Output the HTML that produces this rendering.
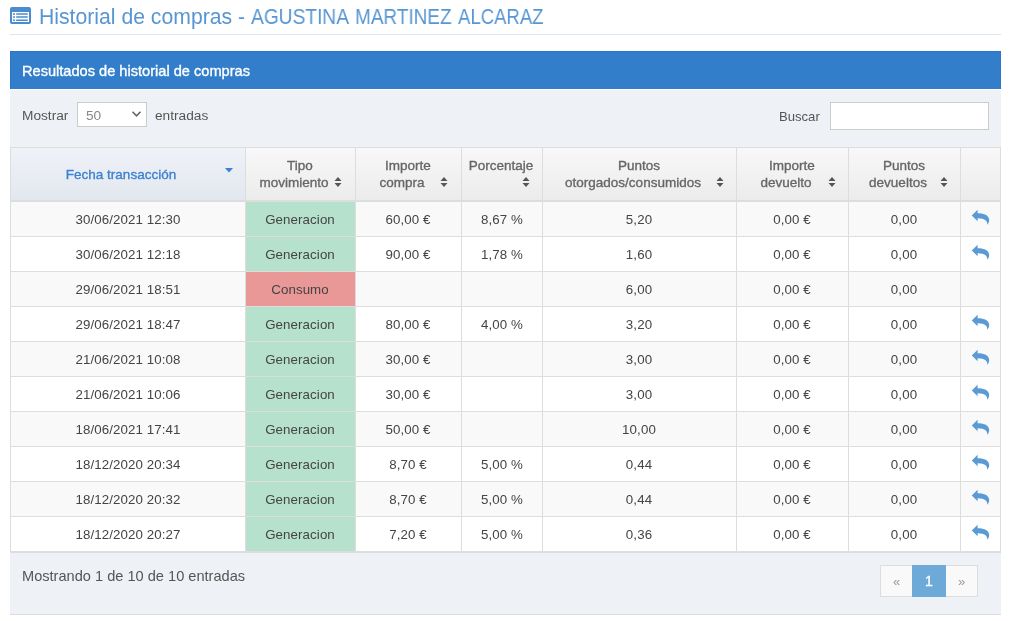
<!DOCTYPE html>
<html><head><meta charset="utf-8"><title>Historial de compras</title>
<style>
html,body{margin:0;padding:0;background:#fff;}
body{width:1011px;height:621px;position:relative;overflow:hidden;font-family:"Liberation Sans",sans-serif;color:#444444;}
.a{position:absolute;}
.t{position:absolute;white-space:nowrap;line-height:16px;height:16px;will-change:transform;}
.c{text-align:center;}
.hl{position:absolute;background:#dddddd;height:1px;}
.vl{position:absolute;background:#dddddd;width:1px;}
</style></head><body>

<svg class="a" style="left:10px;top:7px" width="21" height="17" viewBox="0 0 21 17">
<path fill="#4a8dce" d="M2,0H19A2,2 0 0 1 21,2V15A2,2 0 0 1 19,17H2A2,2 0 0 1 0,15V2A2,2 0 0 1 2,0ZM2,5V15H19V5Z"/>
<rect x="3" y="6.3" width="2" height="1.5" fill="#4a8dce"/><rect x="6" y="6.3" width="12" height="1.5" rx=".7" fill="#4a8dce"/>
<rect x="3" y="9.3" width="2" height="1.5" fill="#4a8dce"/><rect x="6" y="9.3" width="12" height="1.5" rx=".7" fill="#4a8dce"/>
<rect x="3" y="12.4" width="2" height="1.5" fill="#4a8dce"/><rect x="6" y="12.4" width="12" height="1.5" rx=".7" fill="#4a8dce"/>
</svg>
<div class="t" id="title1" style="left:39px;top:6px;font-size:21.2px;letter-spacing:0px;line-height:22px;height:22px;color:#5796d3">Historial de compras -</div>
<div class="t" style="left:251px;top:6px;font-size:21.2px;line-height:22px;height:22px;color:#5796d3;transform:scaleX(0.905);transform-origin:0 0">AGUSTINA</div>
<div class="t" style="left:354.5px;top:6px;font-size:21.2px;line-height:22px;height:22px;color:#5796d3;transform:scaleX(0.895);transform-origin:0 0">MARTINEZ</div>
<div class="t" style="left:457.5px;top:6px;font-size:21.2px;line-height:22px;height:22px;color:#5796d3;transform:scaleX(0.875);transform-origin:0 0">ALCARAZ</div>
<div class="a" style="left:10px;top:34px;width:991px;height:1px;background:#dce6f1"></div>
<div class="a" style="left:10px;top:51px;width:991px;height:38px;background:#327ecb;box-sizing:border-box;border:1px solid #2a77c9;border-bottom:0"></div>
<div class="t" id="ph" style="left:22px;top:63px;font-size:14.6px;-webkit-text-stroke:0.35px #fff;color:#fff">Resultados de historial de compras</div>
<div class="a" style="left:10px;top:90px;width:991px;height:524px;background:#eef1f6"></div>
<div class="a" style="left:10px;top:614px;width:991px;height:1px;background:#dddddd"></div>
<div class="t" id="mostrar" style="left:22px;top:108px;font-size:13.7px;color:#555555">Mostrar</div>
<div class="a" style="left:77px;top:102px;width:70px;height:25px;box-sizing:border-box;border:1px solid #cccccc;background:#fff"></div>
<div class="t" style="left:86px;top:108px;font-size:13.7px;color:#888">50</div>
<svg class="a" style="left:131px;top:110px" width="11" height="8" viewBox="0 0 11 8"><path d="M1.5,1.8L5.5,5.8L9.5,1.8" fill="none" stroke="#666" stroke-width="1.6"/></svg>
<div class="t" id="entradas" style="left:155px;top:108px;font-size:13.7px;color:#555555">entradas</div>
<div class="t" id="buscar" style="left:779px;top:109px;font-size:13.1px;color:#555555">Buscar</div>
<div class="a" style="left:830px;top:102px;width:159px;height:28px;box-sizing:border-box;border:1px solid #cccccc;background:#fff"></div>
<div class="a" style="left:10px;top:147px;width:991px;height:55px;background:linear-gradient(#f8f8f8,#ebebeb)"></div>
<div class="a" style="left:10px;top:147px;width:235px;height:55px;background:linear-gradient(#eff2f7,#e2e7ef)"></div>
<div class="hl" style="left:10px;top:147px;width:991px"></div>
<div class="hl" style="left:10px;top:200px;width:991px;height:2px"></div>
<div class="a" style="left:10px;top:202px;width:991px;height:34px;background:#f9f9f9"></div>
<div class="a" style="left:246px;top:202px;width:109px;height:34px;background:#b6e1cc"></div>
<div class="hl" style="left:10px;top:236px;width:991px;height:1px"></div>
<div class="a" style="left:10px;top:237px;width:991px;height:34px;background:#ffffff"></div>
<div class="a" style="left:246px;top:237px;width:109px;height:34px;background:#b6e1cc"></div>
<div class="hl" style="left:10px;top:271px;width:991px;height:1px"></div>
<div class="a" style="left:10px;top:272px;width:991px;height:34px;background:#f9f9f9"></div>
<div class="a" style="left:246px;top:272px;width:109px;height:34px;background:#e99797"></div>
<div class="hl" style="left:10px;top:306px;width:991px;height:1px"></div>
<div class="a" style="left:10px;top:307px;width:991px;height:34px;background:#ffffff"></div>
<div class="a" style="left:246px;top:307px;width:109px;height:34px;background:#b6e1cc"></div>
<div class="hl" style="left:10px;top:341px;width:991px;height:1px"></div>
<div class="a" style="left:10px;top:342px;width:991px;height:34px;background:#f9f9f9"></div>
<div class="a" style="left:246px;top:342px;width:109px;height:34px;background:#b6e1cc"></div>
<div class="hl" style="left:10px;top:376px;width:991px;height:1px"></div>
<div class="a" style="left:10px;top:377px;width:991px;height:34px;background:#ffffff"></div>
<div class="a" style="left:246px;top:377px;width:109px;height:34px;background:#b6e1cc"></div>
<div class="hl" style="left:10px;top:411px;width:991px;height:1px"></div>
<div class="a" style="left:10px;top:412px;width:991px;height:34px;background:#f9f9f9"></div>
<div class="a" style="left:246px;top:412px;width:109px;height:34px;background:#b6e1cc"></div>
<div class="hl" style="left:10px;top:446px;width:991px;height:1px"></div>
<div class="a" style="left:10px;top:447px;width:991px;height:34px;background:#ffffff"></div>
<div class="a" style="left:246px;top:447px;width:109px;height:34px;background:#b6e1cc"></div>
<div class="hl" style="left:10px;top:481px;width:991px;height:1px"></div>
<div class="a" style="left:10px;top:482px;width:991px;height:34px;background:#f9f9f9"></div>
<div class="a" style="left:246px;top:482px;width:109px;height:34px;background:#b6e1cc"></div>
<div class="hl" style="left:10px;top:516px;width:991px;height:1px"></div>
<div class="a" style="left:10px;top:517px;width:991px;height:34px;background:#ffffff"></div>
<div class="a" style="left:246px;top:517px;width:109px;height:34px;background:#b6e1cc"></div>
<div class="hl" style="left:10px;top:551px;width:991px;height:2px"></div>
<div class="vl" style="left:10px;top:147px;height:406px"></div>
<div class="vl" style="left:245px;top:147px;height:406px"></div>
<div class="vl" style="left:355px;top:147px;height:406px"></div>
<div class="vl" style="left:461px;top:147px;height:406px"></div>
<div class="vl" style="left:542px;top:147px;height:406px"></div>
<div class="vl" style="left:736px;top:147px;height:406px"></div>
<div class="vl" style="left:848px;top:147px;height:406px"></div>
<div class="vl" style="left:960px;top:147px;height:406px"></div>
<div class="vl" style="left:1000px;top:147px;height:406px"></div>
<div class="t c" style="left:21px;width:200px;top:167px;font-size:13.5px;-webkit-text-stroke:0.35px #3d82d0;color:#3d82d0">Fecha transacción</div>
<div class="t c" style="left:200px;width:200px;top:158px;font-size:13.5px;-webkit-text-stroke:0.35px #666666;color:#666666">Tipo</div>
<div class="t c" style="left:194px;width:200px;top:175px;font-size:13.5px;-webkit-text-stroke:0.35px #666666;color:#666666">movimiento</div>
<div class="t c" style="left:308px;width:200px;top:158px;font-size:13.5px;-webkit-text-stroke:0.35px #666666;color:#666666">Importe</div>
<div class="t c" style="left:302px;width:200px;top:175px;font-size:13.5px;-webkit-text-stroke:0.35px #666666;color:#666666">compra</div>
<div class="t c" style="left:401px;width:200px;top:158px;font-size:13.5px;-webkit-text-stroke:0.35px #666666;color:#666666">Porcentaje</div>
<div class="t c" style="left:539px;width:200px;top:158px;font-size:13.5px;-webkit-text-stroke:0.35px #666666;color:#666666">Puntos</div>
<div class="t c" style="left:533px;width:200px;top:175px;font-size:13.5px;-webkit-text-stroke:0.35px #666666;color:#666666">otorgados/consumidos</div>
<div class="t c" style="left:692px;width:200px;top:158px;font-size:13.5px;-webkit-text-stroke:0.35px #666666;color:#666666">Importe</div>
<div class="t c" style="left:686px;width:200px;top:175px;font-size:13.5px;-webkit-text-stroke:0.35px #666666;color:#666666">devuelto</div>
<div class="t c" style="left:804px;width:200px;top:158px;font-size:13.5px;-webkit-text-stroke:0.35px #666666;color:#666666">Puntos</div>
<div class="t c" style="left:798px;width:200px;top:175px;font-size:13.5px;-webkit-text-stroke:0.35px #666666;color:#666666">devueltos</div>
<svg class="a" style="left:334px;top:176px" width="8" height="12" viewBox="0 0 8 12"><path d="M0.5,5H7.5L4,1Z M0.5,7H7.5L4,11Z" fill="#555"/></svg>
<svg class="a" style="left:440px;top:176px" width="8" height="12" viewBox="0 0 8 12"><path d="M0.5,5H7.5L4,1Z M0.5,7H7.5L4,11Z" fill="#555"/></svg>
<svg class="a" style="left:522px;top:176px" width="8" height="12" viewBox="0 0 8 12"><path d="M0.5,5H7.5L4,1Z M0.5,7H7.5L4,11Z" fill="#555"/></svg>
<svg class="a" style="left:716px;top:176px" width="8" height="12" viewBox="0 0 8 12"><path d="M0.5,5H7.5L4,1Z M0.5,7H7.5L4,11Z" fill="#555"/></svg>
<svg class="a" style="left:828px;top:176px" width="8" height="12" viewBox="0 0 8 12"><path d="M0.5,5H7.5L4,1Z M0.5,7H7.5L4,11Z" fill="#555"/></svg>
<svg class="a" style="left:940px;top:176px" width="8" height="12" viewBox="0 0 8 12"><path d="M0.5,5H7.5L4,1Z M0.5,7H7.5L4,11Z" fill="#555"/></svg>
<svg class="a" style="left:225px;top:168px" width="8" height="5" viewBox="0 0 8 5"><path d="M0,0H8L4,4.5Z" fill="#3d82d0"/></svg>
<div class="t c" style="left:27.5px;width:200px;top:212px;font-size:13.3px;letter-spacing:0.1px">30/06/2021 12:30</div>
<div class="t c" style="left:200.0px;width:200px;top:212px;font-size:13.3px;letter-spacing:0.1px">Generacion</div>
<div class="t c" style="left:308.0px;width:200px;top:212px;font-size:13.3px;letter-spacing:0.1px">60,00 €</div>
<div class="t c" style="left:401.5px;width:200px;top:212px;font-size:13.3px;letter-spacing:0.1px">8,67 %</div>
<div class="t c" style="left:539.0px;width:200px;top:212px;font-size:13.3px;letter-spacing:0.1px">5,20</div>
<div class="t c" style="left:692.0px;width:200px;top:212px;font-size:13.3px;letter-spacing:0.1px">0,00 €</div>
<div class="t c" style="left:804.0px;width:200px;top:212px;font-size:13.3px;letter-spacing:0.1px">0,00</div>
<svg class="a" style="left:971px;top:209px" width="19" height="16" viewBox="0 0 19 16"><path fill="#5b9bd5" d="M0.8,6.4L6.6,0.8V4.2C11.5,4.2 18.2,5.5 18.2,11C18.2,13 17.2,14.8 16.3,15.8C16.6,12.5 14.5,9.3 6.6,9.3V12.2Z"/></svg>
<div class="t c" style="left:27.5px;width:200px;top:247px;font-size:13.3px;letter-spacing:0.1px">30/06/2021 12:18</div>
<div class="t c" style="left:200.0px;width:200px;top:247px;font-size:13.3px;letter-spacing:0.1px">Generacion</div>
<div class="t c" style="left:308.0px;width:200px;top:247px;font-size:13.3px;letter-spacing:0.1px">90,00 €</div>
<div class="t c" style="left:401.5px;width:200px;top:247px;font-size:13.3px;letter-spacing:0.1px">1,78 %</div>
<div class="t c" style="left:539.0px;width:200px;top:247px;font-size:13.3px;letter-spacing:0.1px">1,60</div>
<div class="t c" style="left:692.0px;width:200px;top:247px;font-size:13.3px;letter-spacing:0.1px">0,00 €</div>
<div class="t c" style="left:804.0px;width:200px;top:247px;font-size:13.3px;letter-spacing:0.1px">0,00</div>
<svg class="a" style="left:971px;top:244px" width="19" height="16" viewBox="0 0 19 16"><path fill="#5b9bd5" d="M0.8,6.4L6.6,0.8V4.2C11.5,4.2 18.2,5.5 18.2,11C18.2,13 17.2,14.8 16.3,15.8C16.6,12.5 14.5,9.3 6.6,9.3V12.2Z"/></svg>
<div class="t c" style="left:27.5px;width:200px;top:282px;font-size:13.3px;letter-spacing:0.1px">29/06/2021 18:51</div>
<div class="t c" style="left:200.0px;width:200px;top:282px;font-size:13.3px;letter-spacing:0.1px">Consumo</div>
<div class="t c" style="left:539.0px;width:200px;top:282px;font-size:13.3px;letter-spacing:0.1px">6,00</div>
<div class="t c" style="left:692.0px;width:200px;top:282px;font-size:13.3px;letter-spacing:0.1px">0,00 €</div>
<div class="t c" style="left:804.0px;width:200px;top:282px;font-size:13.3px;letter-spacing:0.1px">0,00</div>
<div class="t c" style="left:27.5px;width:200px;top:317px;font-size:13.3px;letter-spacing:0.1px">29/06/2021 18:47</div>
<div class="t c" style="left:200.0px;width:200px;top:317px;font-size:13.3px;letter-spacing:0.1px">Generacion</div>
<div class="t c" style="left:308.0px;width:200px;top:317px;font-size:13.3px;letter-spacing:0.1px">80,00 €</div>
<div class="t c" style="left:401.5px;width:200px;top:317px;font-size:13.3px;letter-spacing:0.1px">4,00 %</div>
<div class="t c" style="left:539.0px;width:200px;top:317px;font-size:13.3px;letter-spacing:0.1px">3,20</div>
<div class="t c" style="left:692.0px;width:200px;top:317px;font-size:13.3px;letter-spacing:0.1px">0,00 €</div>
<div class="t c" style="left:804.0px;width:200px;top:317px;font-size:13.3px;letter-spacing:0.1px">0,00</div>
<svg class="a" style="left:971px;top:314px" width="19" height="16" viewBox="0 0 19 16"><path fill="#5b9bd5" d="M0.8,6.4L6.6,0.8V4.2C11.5,4.2 18.2,5.5 18.2,11C18.2,13 17.2,14.8 16.3,15.8C16.6,12.5 14.5,9.3 6.6,9.3V12.2Z"/></svg>
<div class="t c" style="left:27.5px;width:200px;top:352px;font-size:13.3px;letter-spacing:0.1px">21/06/2021 10:08</div>
<div class="t c" style="left:200.0px;width:200px;top:352px;font-size:13.3px;letter-spacing:0.1px">Generacion</div>
<div class="t c" style="left:308.0px;width:200px;top:352px;font-size:13.3px;letter-spacing:0.1px">30,00 €</div>
<div class="t c" style="left:539.0px;width:200px;top:352px;font-size:13.3px;letter-spacing:0.1px">3,00</div>
<div class="t c" style="left:692.0px;width:200px;top:352px;font-size:13.3px;letter-spacing:0.1px">0,00 €</div>
<div class="t c" style="left:804.0px;width:200px;top:352px;font-size:13.3px;letter-spacing:0.1px">0,00</div>
<svg class="a" style="left:971px;top:349px" width="19" height="16" viewBox="0 0 19 16"><path fill="#5b9bd5" d="M0.8,6.4L6.6,0.8V4.2C11.5,4.2 18.2,5.5 18.2,11C18.2,13 17.2,14.8 16.3,15.8C16.6,12.5 14.5,9.3 6.6,9.3V12.2Z"/></svg>
<div class="t c" style="left:27.5px;width:200px;top:387px;font-size:13.3px;letter-spacing:0.1px">21/06/2021 10:06</div>
<div class="t c" style="left:200.0px;width:200px;top:387px;font-size:13.3px;letter-spacing:0.1px">Generacion</div>
<div class="t c" style="left:308.0px;width:200px;top:387px;font-size:13.3px;letter-spacing:0.1px">30,00 €</div>
<div class="t c" style="left:539.0px;width:200px;top:387px;font-size:13.3px;letter-spacing:0.1px">3,00</div>
<div class="t c" style="left:692.0px;width:200px;top:387px;font-size:13.3px;letter-spacing:0.1px">0,00 €</div>
<div class="t c" style="left:804.0px;width:200px;top:387px;font-size:13.3px;letter-spacing:0.1px">0,00</div>
<svg class="a" style="left:971px;top:384px" width="19" height="16" viewBox="0 0 19 16"><path fill="#5b9bd5" d="M0.8,6.4L6.6,0.8V4.2C11.5,4.2 18.2,5.5 18.2,11C18.2,13 17.2,14.8 16.3,15.8C16.6,12.5 14.5,9.3 6.6,9.3V12.2Z"/></svg>
<div class="t c" style="left:27.5px;width:200px;top:422px;font-size:13.3px;letter-spacing:0.1px">18/06/2021 17:41</div>
<div class="t c" style="left:200.0px;width:200px;top:422px;font-size:13.3px;letter-spacing:0.1px">Generacion</div>
<div class="t c" style="left:308.0px;width:200px;top:422px;font-size:13.3px;letter-spacing:0.1px">50,00 €</div>
<div class="t c" style="left:539.0px;width:200px;top:422px;font-size:13.3px;letter-spacing:0.1px">10,00</div>
<div class="t c" style="left:692.0px;width:200px;top:422px;font-size:13.3px;letter-spacing:0.1px">0,00 €</div>
<div class="t c" style="left:804.0px;width:200px;top:422px;font-size:13.3px;letter-spacing:0.1px">0,00</div>
<svg class="a" style="left:971px;top:419px" width="19" height="16" viewBox="0 0 19 16"><path fill="#5b9bd5" d="M0.8,6.4L6.6,0.8V4.2C11.5,4.2 18.2,5.5 18.2,11C18.2,13 17.2,14.8 16.3,15.8C16.6,12.5 14.5,9.3 6.6,9.3V12.2Z"/></svg>
<div class="t c" style="left:27.5px;width:200px;top:457px;font-size:13.3px;letter-spacing:0.1px">18/12/2020 20:34</div>
<div class="t c" style="left:200.0px;width:200px;top:457px;font-size:13.3px;letter-spacing:0.1px">Generacion</div>
<div class="t c" style="left:308.0px;width:200px;top:457px;font-size:13.3px;letter-spacing:0.1px">8,70 €</div>
<div class="t c" style="left:401.5px;width:200px;top:457px;font-size:13.3px;letter-spacing:0.1px">5,00 %</div>
<div class="t c" style="left:539.0px;width:200px;top:457px;font-size:13.3px;letter-spacing:0.1px">0,44</div>
<div class="t c" style="left:692.0px;width:200px;top:457px;font-size:13.3px;letter-spacing:0.1px">0,00 €</div>
<div class="t c" style="left:804.0px;width:200px;top:457px;font-size:13.3px;letter-spacing:0.1px">0,00</div>
<svg class="a" style="left:971px;top:454px" width="19" height="16" viewBox="0 0 19 16"><path fill="#5b9bd5" d="M0.8,6.4L6.6,0.8V4.2C11.5,4.2 18.2,5.5 18.2,11C18.2,13 17.2,14.8 16.3,15.8C16.6,12.5 14.5,9.3 6.6,9.3V12.2Z"/></svg>
<div class="t c" style="left:27.5px;width:200px;top:492px;font-size:13.3px;letter-spacing:0.1px">18/12/2020 20:32</div>
<div class="t c" style="left:200.0px;width:200px;top:492px;font-size:13.3px;letter-spacing:0.1px">Generacion</div>
<div class="t c" style="left:308.0px;width:200px;top:492px;font-size:13.3px;letter-spacing:0.1px">8,70 €</div>
<div class="t c" style="left:401.5px;width:200px;top:492px;font-size:13.3px;letter-spacing:0.1px">5,00 %</div>
<div class="t c" style="left:539.0px;width:200px;top:492px;font-size:13.3px;letter-spacing:0.1px">0,44</div>
<div class="t c" style="left:692.0px;width:200px;top:492px;font-size:13.3px;letter-spacing:0.1px">0,00 €</div>
<div class="t c" style="left:804.0px;width:200px;top:492px;font-size:13.3px;letter-spacing:0.1px">0,00</div>
<svg class="a" style="left:971px;top:489px" width="19" height="16" viewBox="0 0 19 16"><path fill="#5b9bd5" d="M0.8,6.4L6.6,0.8V4.2C11.5,4.2 18.2,5.5 18.2,11C18.2,13 17.2,14.8 16.3,15.8C16.6,12.5 14.5,9.3 6.6,9.3V12.2Z"/></svg>
<div class="t c" style="left:27.5px;width:200px;top:527px;font-size:13.3px;letter-spacing:0.1px">18/12/2020 20:27</div>
<div class="t c" style="left:200.0px;width:200px;top:527px;font-size:13.3px;letter-spacing:0.1px">Generacion</div>
<div class="t c" style="left:308.0px;width:200px;top:527px;font-size:13.3px;letter-spacing:0.1px">7,20 €</div>
<div class="t c" style="left:401.5px;width:200px;top:527px;font-size:13.3px;letter-spacing:0.1px">5,00 %</div>
<div class="t c" style="left:539.0px;width:200px;top:527px;font-size:13.3px;letter-spacing:0.1px">0,36</div>
<div class="t c" style="left:692.0px;width:200px;top:527px;font-size:13.3px;letter-spacing:0.1px">0,00 €</div>
<div class="t c" style="left:804.0px;width:200px;top:527px;font-size:13.3px;letter-spacing:0.1px">0,00</div>
<svg class="a" style="left:971px;top:524px" width="19" height="16" viewBox="0 0 19 16"><path fill="#5b9bd5" d="M0.8,6.4L6.6,0.8V4.2C11.5,4.2 18.2,5.5 18.2,11C18.2,13 17.2,14.8 16.3,15.8C16.6,12.5 14.5,9.3 6.6,9.3V12.2Z"/></svg>
<div class="t" id="mostrando" style="left:22px;top:568px;font-size:14.6px;color:#555555">Mostrando 1 de 10 de 10 entradas</div>
<div class="a" style="left:880px;top:565px;width:98px;height:32px;box-sizing:border-box;border:1px solid #dddddd;background:#f9f9f9"></div>
<div class="a" style="left:912px;top:565px;width:34px;height:32px;background:#6eaad8"></div>
<div class="t c" style="left:881px;width:31px;top:574px;font-size:13px;color:#999">&laquo;</div>
<div class="t c" style="left:912px;width:34px;top:573px;font-size:14px;-webkit-text-stroke:0.3px #fff;color:#fff">1</div>
<div class="t c" style="left:946px;width:31px;top:574px;font-size:13px;color:#999">&raquo;</div>
</body></html>
